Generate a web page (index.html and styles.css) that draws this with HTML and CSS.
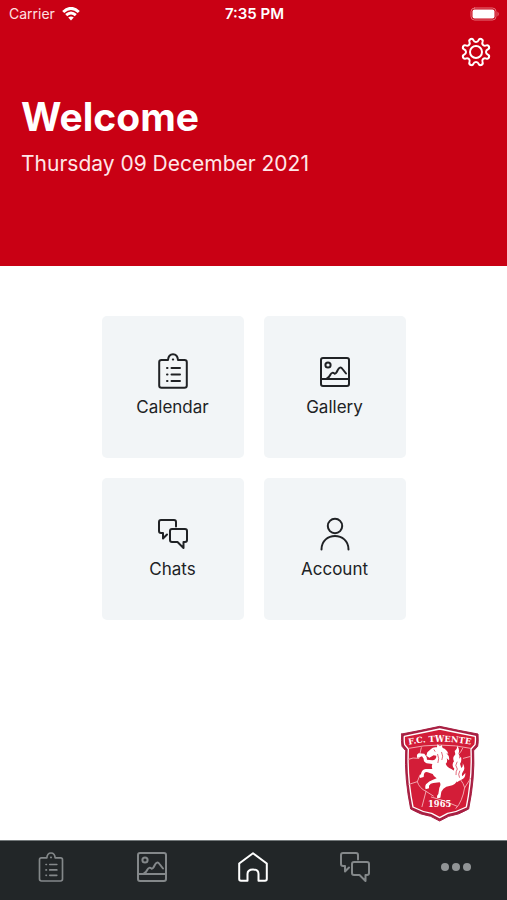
FILE: index.html
```html
<!DOCTYPE html>
<html lang="en">
<head>
<meta charset="utf-8">
<meta name="viewport" content="width=device-width, initial-scale=1">
<title>Welcome</title>
<link rel="stylesheet" href="styles.css">
</head>
<body>
<svg class="sprite" aria-hidden="true">
  <symbol id="clipboard" viewBox="0 0 30 36">
    <path d="M10 7H3.500Q1.200 7 1.200 9.300V32.500Q1.200 34.800 3.500 34.800H26.500Q28.800 34.800 28.800 32.500V9.300Q28.800 7 26.500 7H20Q19.500 1.200 15 1.200T10 7Z"/>
    <path d="M13.500 15H22M13.500 21.500H22M13.500 28H22M9 15h.5M9 21.500h.5M9 28h.5M14.800 6.500h.4"/>
  </symbol>
  <symbol id="picture" viewBox="0 0 30 30">
    <rect x="1" y="1" width="28" height="28" rx="2"/>
    <circle cx="8" cy="8" r="2.600"/>
    <path d="M1 22H29M7 21.500Q9 20.500 10.500 17.500Q12 14.800 14.500 16.500Q15.800 17.200 17.500 13.500Q20 8.500 22.500 12L26 16.500"/>
  </symbol>
  <symbol id="chats" viewBox="0 0 30 30">
    <path d="M18 7.500V3Q18 1 16 1H3Q1 1 1 3V12Q1 14 3 14H5V19.500L9 15.500"/>
    <path d="M14 10H27Q29 10 29 12V21Q29 23 27 23H25.500V29L19.500 23H14Q12 23 12 21V12Q12 10 14 10Z"/>
  </symbol>
  <symbol id="person" viewBox="0 0 30 34">
    <circle cx="15" cy="9" r="7.200"/>
    <path d="M1.500 32.500C1.500 14.500 28.500 14.500 28.500 32.500"/>
  </symbol>
  <symbol id="house" viewBox="0 0 30 30">
    <path d="M1.200 11.500L15 1.200L28.800 11.500V27Q28.800 28.800 27 28.800H20.500V22Q20.500 17.500 15 17.500T9.500 22V28.800H3Q1.200 28.800 1.200 27Z"/>
  </symbol>
</svg>

<header class="header">
  <div class="status">
    <span class="carrier">Carrier
      <svg class="wifi" viewBox="0 0 18 14" aria-hidden="true">
        <path class="wave" d="M1.200 5Q9-2.200 16.800 5M4.200 8.200Q9 3.800 13.800 8.200"/>
        <path class="dot" d="M6.200 10.600Q9 8.300 11.800 10.600L9 13.600Z"/>
      </svg>
    </span>
    <span class="time">7:35 PM</span>
    <svg class="battery" viewBox="0 0 30 14" aria-hidden="true">
      <rect class="case" x="1" y="1" width="25" height="12" rx="3.500"/>
      <rect class="charge" x="2.500" y="2.500" width="22" height="9" rx="2"/>
      <path class="cap" d="M27.500 4.500Q30 7 27.500 9.500Z"/>
    </svg>
  </div>
  <div class="actions">
    <button class="settings" type="button" aria-label="Settings">
      <svg viewBox="-16 -16 32 32" aria-hidden="true">
        <path id="tooth" d="M-5.400-12.900C-4.100-13.440-3.200-13.200-2.700-12C-2.100-10.400-1.200-10 0-10S2.100-10.400 2.700-12C3.200-13.200 4.100-13.440 5.400-12.900"/>
        <use href="#tooth" transform="rotate(45)"/>
        <use href="#tooth" transform="rotate(90)"/>
        <use href="#tooth" transform="rotate(135)"/>
        <use href="#tooth" transform="rotate(180)"/>
        <use href="#tooth" transform="rotate(225)"/>
        <use href="#tooth" transform="rotate(270)"/>
        <use href="#tooth" transform="rotate(315)"/>
        <circle r="6"/>
      </svg>
    </button>
  </div>
  <div class="greeting">
    <h1>Welcome</h1>
    <p>Thursday 09 December 2021</p>
  </div>
</header>

<main class="main">
  <div class="tiles">
    <a class="tile" href="#calendar"><svg aria-hidden="true"><use href="#clipboard"/></svg>Calendar</a>
    <a class="tile" href="#gallery"><svg class="short" aria-hidden="true"><use href="#picture"/></svg>Gallery</a>
    <a class="tile" href="#messages"><svg class="short" aria-hidden="true"><use href="#chats"/></svg>Chats</a>
    <a class="tile" href="#account"><svg class="short" aria-hidden="true"><use href="#person"/></svg>Account</a>
  </div>
  <svg class="crest" viewBox="0 0 240 294" role="img" aria-label="F.C. Twente 1965">
    <path class="edge" d="M5 27Q65 16 119 4Q173 16 234 27Q236 52 233 64L221 77Q225 160 206 252Q176 270 146 274L119 288L92 274Q62 270 32 252Q13 160 17 77L6 64Q3 48 5 27Z"/>
    <path class="field" d="M13 34Q68 23 119 12Q171 23 226 34Q227 50 225 59L213 72Q217 158 199 246Q171 261 143 265L119 278L95 265Q67 261 39 246Q21 158 25 72L14 59Q12 46 13 34Z"/>
    <path class="seam" d="M26 70Q119 50 212 70M25 103Q38 96 56 100M57 99L64 68M27 178L52 170Q58 190 78 199M52 170L60 150M78 199L66 245M94 216Q130 224 172 244M168 250Q187 230 194 188M194 188Q190 174 183 166M194 188L212 160M170 92Q184 84 188 70M190 100L213 94M78 199L100 213"/>
    <g class="horse">
      <path d="M112 58L120 64L125 60L128 69Q141 73 145 87L139 84Q150 94 147 106L140 100Q144 111 137 116Q140 126 154 132Q172 141 173 158Q173 174 157 181L139 185Q129 189 124 200L121 218L112 220Q109 213 115 207L118 188Q124 179 119 172L100 174Q91 175 87 182L87 190L77 193Q74 185 78 178Q87 167 99 164L110 160Q101 155 98 147L83 142Q75 138 72 147L71 156L60 159Q57 152 63 147Q65 133 77 132L97 132Q94 125 97 117L80 115Q70 111 71 101L66 94L52 99Q48 88 56 85L73 86Q81 94 81 104L97 106Q109 105 109 92L101 91L88 98L79 92L82 82L93 72Q99 65 111 67Z"/>
      <path d="M165 157Q157 141 163 131Q153 121 162 109Q156 99 166 88L164 78Q174 70 171 61Q181 75 175 86Q181 92 177 101L183 95Q186 109 180 116L184 129Q190 125 188 114Q198 132 188 142Q184 148 187 154L196 144Q197 160 184 164Q176 168 171 172Z"/>
      <path class="gap" d="M168 149Q167 139 172 132Q163 121 171 111M178 157Q173 148 179 138"/>
      <path class="gap" d="M102 74L105 79M113 88Q119 101 114 113M125 82Q131 94 126 104"/>
    </g>
    <path id="arch" class="guide" d="M16 61Q119 39 222 61"/>
    <text class="lettering"><textPath href="#arch" startOffset="50%">F.C. TWENTE</textPath></text>
    <text class="lettering" x="119" y="246">1965</text>
  </svg>
</main>

<nav class="tabs" aria-label="Main">
  <a href="#calendar" aria-label="Calendar"><svg aria-hidden="true"><use href="#clipboard"/></svg></a>
  <a href="#gallery" aria-label="Gallery"><svg aria-hidden="true"><use href="#picture"/></svg></a>
  <a class="active" href="#home" aria-label="Home"><svg aria-hidden="true"><use href="#house"/></svg></a>
  <a href="#messages" aria-label="Chats"><svg aria-hidden="true"><use href="#chats"/></svg></a>
  <a href="#more" aria-label="More"><svg class="dots" viewBox="0 0 30 30" aria-hidden="true"><circle cx="4" cy="15" r="4"/><circle cx="15" cy="15" r="4"/><circle cx="26" cy="15" r="4"/></svg></a>
</nav>
</body>
</html>
```
FILE: styles.css
```css
* {
  box-sizing: border-box;
}

body {
  margin: 0;
  min-height: 100vh;
  display: flex;
  flex-direction: column;
  background: #fff;
  color: #202225;
  font-family: Inter, "Liberation Sans", sans-serif;
}

a {
  color: inherit;
  text-decoration: none;
}

svg {
  display: block;
  fill: none;
  stroke: currentColor;
  stroke-width: 2;
  stroke-linecap: round;
  stroke-linejoin: round;
}

.sprite {
  position: absolute;
  width: 0;
  height: 0;
}

.header {
  background: #c90014;
  color: #fff;
  padding-bottom: 88px;
}

.status {
  display: grid;
  grid-template-columns: 1fr auto 1fr;
  align-items: center;
  height: 28px;
  padding: 0 7px 0 9px;
  font-size: 14px;
  line-height: 20px;
}

.carrier {
  display: flex;
  align-items: center;
  gap: 7px;
  color: #ffe0e2;
}

.wifi {
  width: 18px;
  height: 14px;
  color: #fff;
}

.wifi .dot,
.battery .charge {
  fill: #fff;
  stroke: none;
}

.wifi .wave {
  stroke-width: 3;
  stroke-linecap: butt;
}

.time {
  font-size: 15px;
  font-weight: 600;
}

.battery {
  width: 30px;
  height: 14px;
  justify-self: end;
}

.battery .case {
  stroke: #e6707a;
  stroke-width: 1;
}

.battery .cap {
  fill: #e6707a;
  stroke: none;
}

.actions {
  display: flex;
  justify-content: flex-end;
  padding: 8px 15px 0;
}

.settings {
  padding: 0;
  border: 0;
  background: none;
  color: #fff;
}

.settings svg {
  width: 32px;
  height: 32px;
}

.greeting {
  padding: 24px 21px 0;
}

h1 {
  margin: 0;
  font-size: 39px;
  line-height: 50px;
  font-weight: 700;
}

p {
  margin: 8px 0 0;
  font-size: 21px;
  line-height: 28px;
  color: #ffe6e8;
}

.main {
  flex: 1;
  display: flex;
  flex-direction: column;
  justify-content: space-between;
  padding: 50px 27px 17px;
}

.tiles {
  display: grid;
  grid-template-columns: repeat(2, 142px);
  gap: 20px;
  justify-content: center;
}

.tile {
  display: flex;
  flex-direction: column;
  align-items: center;
  height: 142px;
  padding-top: 37px;
  border-radius: 5px;
  background: #f2f5f7;
  font-size: 17px;
  line-height: 24px;
}

.tile svg {
  width: 30px;
  height: 36px;
  margin-bottom: 6px;
}

.tile .short {
  height: 34px;
  margin: 2px 0 6px;
}

.crest {
  width: 80px;
  height: 98px;
  align-self: flex-end;
  stroke: none;
}

.crest .edge {
  fill: #a81f42;
  stroke: #a81f42;
  stroke-width: 3;
}

.crest .field {
  fill: #d31d38;
  stroke: #fff;
  stroke-width: 4;
}

.crest .seam {
  stroke: #f2a5ae;
  stroke-width: 3;
}

.crest .horse {
  fill: #fff;
}

.crest .gap {
  fill: none;
  stroke: #d31d38;
  stroke-width: 2;
}

.crest .guide {
  fill: none;
}

.lettering {
  fill: #fff;
  font-family: "DejaVu Serif", serif;
  font-size: 25px;
  font-weight: 700;
  text-anchor: middle;
}

.tabs {
  display: grid;
  grid-template-columns: repeat(5, 1fr);
  height: 60px;
  padding-top: 11px;
  border-top: 1px solid #73787a;
  background: #222628;
  color: #84888a;
}

.tabs a {
  display: flex;
  justify-content: center;
}

.tabs svg {
  width: 30px;
  height: 30px;
}

.tabs .active {
  color: #fff;
}

.tabs .dots {
  fill: #919496;
  stroke: none;
}
```
